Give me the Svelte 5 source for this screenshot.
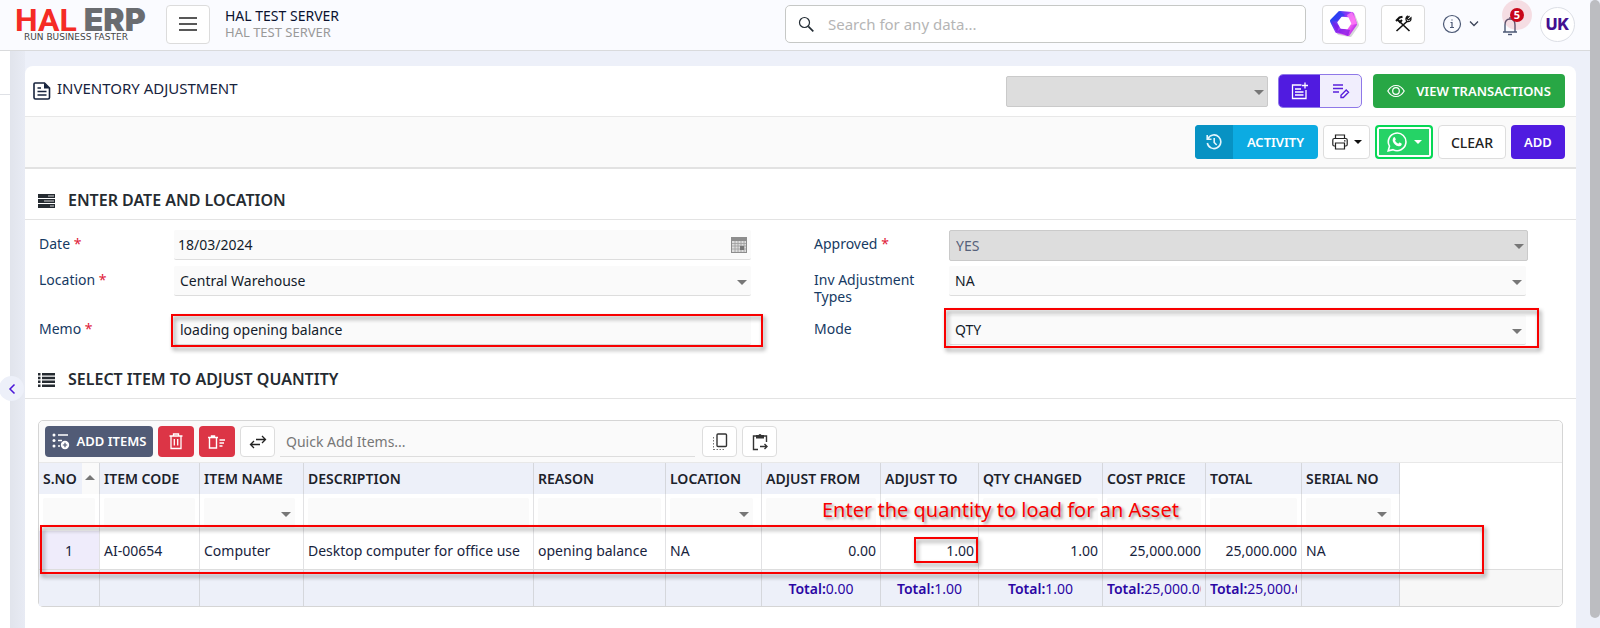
<script>
  let search = "";
  let date = "18/03/2024";
  let location = "Central Warehouse";
  let memo = "loading opening balance";
  let adjustmentType = "NA";
  let mode = "QTY";
  let quickAdd = "";

  let columns = [
    { title: "S.NO", width: 61, value: "1", sorted: true },
    { title: "ITEM CODE", width: 100, value: "AI-00654" },
    { title: "ITEM NAME", width: 104, value: "Computer", select: true },
    { title: "DESCRIPTION", width: 230, value: "Desktop computer for office use" },
    { title: "REASON", width: 132, value: "opening balance" },
    { title: "LOCATION", width: 96, value: "NA", select: true },
    { title: "ADJUST FROM", width: 119, value: "0.00", total: "0.00" },
    { title: "ADJUST TO", width: 98, value: "1.00", total: "1.00", marked: true },
    { title: "QTY CHANGED", width: 124, value: "1.00", total: "1.00" },
    { title: "COST PRICE", width: 103, value: "25,000.000", total: "25,000.000" },
    { title: "TOTAL", width: 96, value: "25,000.000", total: "25,000.000" },
    { title: "SERIAL NO", width: 98, value: "NA", select: true },
  ];
</script>

<div class="page">
  <header>
    <div class="logo">
      <div class="brand"><b class="hal">HAL</b><b class="erp">ERP</b></div>
      <div class="tagline">RUN BUSINESS FASTER</div>
    </div>
    <button class="square" aria-label="Menu">
      <svg width="20" height="16" viewBox="0 0 20 16" stroke="#222" stroke-width="1.5"><path d="M1 2h18M1 8h18M1 14h18" /></svg>
    </button>
    <div class="server">
      <strong>HAL TEST SERVER</strong>
      <span>HAL TEST SERVER</span>
    </div>
    <label class="search">
      <svg width="17" height="17" viewBox="0 0 17 17" fill="none" stroke="#222b33"><circle cx="6.5" cy="6.5" r="5" stroke-width="1.2" /><path d="M10.3 10.3l5 5" stroke-width="1.7" /></svg>
      <input bind:value={search} placeholder="Search for any data..." aria-label="Search" />
    </label>
    <button class="square ai" aria-label="Assistant">
      <svg width="32" height="32" viewBox="0 0 32 32" stroke-linejoin="round">
        <defs>
          <linearGradient id="gem" x1="0" y1="0.2" x2="1" y2="0.8">
            <stop offset="0" stop-color="#2547f4" />
            <stop offset="0.4" stop-color="#8a35f5" />
            <stop offset="0.75" stop-color="#f763f3" />
            <stop offset="1" stop-color="#b52bea" />
          </linearGradient>
        </defs>
        <path d="M14 6l11 1 4 10-7 10-11-2-6-10z" fill="#d6d6d9" stroke="#d6d6d9" stroke-width="4" />
        <path d="M12 5l12 1 3 10-7 10-11-3-5-10z" fill="url(#gem)" stroke="url(#gem)" stroke-width="4" />
        <path d="M4 13l7 5-2 7zM9 24l11 4 2-6-9-2z" fill="#7a18e6" opacity="0.7" />
        <path d="M11 3l-8 9 6 1 8-6z" fill="#1f3df2" opacity="0.6" />
        <path d="M19 7l5-3 5 12-6 1z" fill="#ff7cf6" opacity="0.8" />
        <path d="M14 9.500l6 .5 2.500 5.500-3.500 5-6-.5-3-5.500z" fill="#fff" stroke="#fff" stroke-width="1.500" />
      </svg>
    </button>
    <button class="square tools" aria-label="Tools">
      <svg width="18" height="18" viewBox="0 0 18 18" fill="none" stroke="#111" stroke-width="1.600"><path d="M5.500 6.500l10 9.500M2.500 16L13.500 6" /><path d="M2 6L5.500 2.500l3-.7M3.500 4.500l2.500 2.500 2-2" stroke-width="2" /><path d="M15.500 1L13 3.500l1.500 1.500L17 2.800q.5 4.200-4 3.800-2.500-3 .8-5.800" stroke-width="1.200" /></svg>
    </button>
    <button class="bare info" aria-label="Information">
      <svg width="20" height="20" viewBox="0 0 20 20" fill="none" stroke="#4b5875" stroke-width="1.200"><circle cx="10" cy="10" r="8.500" /><path d="M8.500 8.500H10v5M8 13.500h4M9.400 6h1.200" /></svg>
      <svg width="12" height="8" viewBox="0 0 12 8" fill="none" stroke="#3b4358" stroke-width="1.300"><path d="M2 1.500l4 4 4-4" /></svg>
    </button>
    <button class="bare bell" aria-label="Notifications">
      <svg width="16" height="20" viewBox="0 0 16 20" fill="none" stroke="#4b5875" stroke-width="1.400"><path d="M1 16h14M3 16V9q0-6 5-6t5 6v7M8 3V1" /><path d="M6 18.500h4" /></svg>
      <span class="halo"><span class="count">5</span></span>
    </button>
    <button class="avatar">UK</button>
  </header>

  <div class="body">
    <aside>
      <div class="side-top"></div>
      <button class="collapse" aria-label="Expand sidebar">
        <svg width="8" height="12" viewBox="0 0 8 12" fill="none" stroke="#4a16d8" stroke-width="1.500"><path d="M6.500 1.500L2 6l4.500 4.500" /></svg>
      </button>
    </aside>

    <main>
      <div class="title-bar">
        <svg width="18" height="18" viewBox="0 0 18 18" fill="none" stroke="#17233d" stroke-width="1.600"><path d="M2 1h9.500L16.500 6v9.500q0 1.500-1.500 1.500H2.500Q1 17 1 15.500V2q0-1 1-1z" /><path d="M4.500 6H8M4.500 9.500h9M4.500 13h9" stroke-width="1.300" /><path d="M11 1l5.500 5.500H11z" fill="#17233d" stroke="none" /></svg>
        <h1>INVENTORY ADJUSTMENT</h1>
        <div class="select off narrow"><select disabled aria-label="Template"><option></option></select></div>
        <div class="toggle">
          <button class="on" aria-label="New entry">
            <svg width="18" height="18" viewBox="0 0 18 18" fill="none" stroke="#fff" stroke-width="1.300"><path d="M10.500 3H1.500v13.500H15V8M4 7h6M4 10h8.500M4 13h8.500M14 .5v6M11 3.500h6" /></svg>
          </button>
          <button aria-label="Edit entry">
            <svg width="18" height="16" viewBox="0 0 18 16" fill="none" stroke="#5a20dc" stroke-width="1.400"><path d="M1 2h10M1 5.500h10M1 9h6" /><path d="M9 14.500v-2.300l5.200-5.200 2.300 2.300-5.200 5.200z" /></svg>
          </button>
        </div>
        <button class="btn green">
          <svg width="18" height="14" viewBox="0 0 18 14" fill="none" stroke="#fff" stroke-width="1.200"><path d="M.8 7Q4 1.500 9 1.500T17.200 7Q14 12.500 9 12.500T.8 7z" /><circle cx="9" cy="7" r="3.300" /></svg>
          VIEW TRANSACTIONS
        </button>
      </div>

      <div class="actions">
        <button class="activity">
          <span class="clock">
            <svg width="16" height="16" viewBox="0 0 16 16" fill="none" stroke="#e2f5fc" stroke-width="1.600"><path d="M2 4.500A6.800 6.800 0 1 1 1.300 9M1.200 1v4.200h4.300" /><path d="M8.200 4v4.500l2.500 2.500" /></svg>
          </span>
          <span class="word">ACTIVITY</span>
        </button>
        <button class="btn white print" aria-label="Print">
          <svg width="16" height="16" viewBox="0 0 16 16" fill="none" stroke="#222" stroke-width="1.200"><path d="M3.500 4V1h9v3M3.500 12H2.200Q.8 12 .8 10.500V6q0-1.500 1.500-1.500h11.400q1.500 0 1.500 1.500v4.500q0 1.500-1.400 1.500h-1.300M3.500 9h9v6h-9zM12 6.800h1.500" /></svg>
          <i class="caret"></i>
        </button>
        <button class="btn whatsapp" aria-label="WhatsApp">
          <svg width="20" height="20" viewBox="0 0 20 20" fill="none" stroke="#fff" stroke-width="1.600"><path d="M1.200 18.800l1.300-4.600A8.800 8.800 0 1 1 6 17.600z" /><path d="M6.500 5.500q1-.8 1.500 0l.8 1.800q0 .6-.8 1.400 1.200 2.200 3.300 3 1-1.300 1.500-1.100l1.700.9q.5.300 0 1.500-.8 1.500-2.800 1.300-4.500-.8-6-5.300-.2-2.300.8-3.500z" fill="#fff" stroke="none" /></svg>
          <i class="caret"></i>
        </button>
        <button class="btn white clear">CLEAR</button>
        <button class="btn violet">ADD</button>
      </div>

      <h2>
        <svg width="17" height="14" viewBox="0 0 17 14" fill="#252b31"><path d="M0 0h17v4H0zM0 5h17v4H0zM0 10h17v4H0z" /><path d="M10 1.500h6v1h-6zM6 6.500h10v1H6zM12 11.500h4v1h-4z" fill="#fff" opacity="0.8" /></svg>
        ENTER DATE AND LOCATION
      </h2>
      <div class="form">
        <div class="field">
          <label for="date">Date <em>*</em></label>
          <div class="control">
            <input id="date" class="date" bind:value={date} />
            <svg class="calendar" width="16" height="16" viewBox="0 0 16 16"><path d="M0 0h16v16H0z" fill="#8d8d8d" /><path d="M1 4h14v11H1z" fill="#ddd" /><path d="M4 4v11M7 4v11M10 4v11M13 4v11M1 6.500h14M1 9h14M1 12h14" stroke="#9d9d9d" stroke-width="0.800" /><path d="M9 9h4v4H9z" fill="#777" /></svg>
          </div>
        </div>
        <div class="field">
          <label for="approved">Approved <em>*</em></label>
          <div class="select off"><select id="approved" disabled><option>YES</option></select></div>
        </div>
        <div class="field">
          <label for="location">Location <em>*</em></label>
          <div class="select"><select id="location" bind:value={location}><option>Central Warehouse</option></select></div>
        </div>
        <div class="field">
          <label for="types">Inv Adjustment Types</label>
          <div class="select"><select id="types" bind:value={adjustmentType}><option>NA</option></select></div>
        </div>
        <div class="field">
          <label for="memo">Memo <em>*</em></label>
          <div class="control">
            <input id="memo" bind:value={memo} />
            <div class="mark memo-mark"></div>
          </div>
        </div>
        <div class="field">
          <label for="mode">Mode</label>
          <div class="select">
            <select id="mode" bind:value={mode}><option>QTY</option></select>
            <div class="mark mode-mark"></div>
          </div>
        </div>
      </div>

      <h2>
        <svg width="17" height="14" viewBox="0 0 17 14" fill="#252b31"><path d="M0 0h2.500v2.500H0zM0 3.800h2.500v2.500H0zM0 7.600h2.500v2.500H0zM0 11.400h2.500v2.500H0zM4 0h13v2.500H4zM4 3.800h13v2.500H4zM4 7.600h13v2.500H4zM4 11.400h13v2.500H4z" /></svg>
        SELECT ITEM TO ADJUST QUANTITY
      </h2>

      <div class="grid">
        <div class="grid-tools">
          <button class="btn slate">
            <svg width="18" height="17" viewBox="0 0 18 17" fill="none" stroke="#fff" stroke-width="1.500"><path d="M6 2h10M6 7.500h4" /><g fill="#fff" stroke="none"><circle cx="2" cy="2" r="1.500" /><circle cx="2" cy="7.500" r="1.500" /><circle cx="2" cy="13" r="1.500" /><circle cx="13" cy="12" r="4.200" /></g><path d="M6 13h2" /><path d="M13 9.800v4.400M10.800 12h4.400" stroke="#515b76" stroke-width="1.200" /></svg>
            ADD ITEMS
          </button>
          <button class="btn red" aria-label="Delete item">
            <svg width="14" height="17" viewBox="0 0 14 17" fill="none" stroke="#fff" stroke-width="1.300"><path d="M.5 3h13M4.500 3V1h5v2M2 3v12.500h10V3M5.300 6v6.500M8.700 6v6.500" /></svg>
          </button>
          <button class="btn red" aria-label="Clear all items">
            <svg width="18" height="14" viewBox="0 0 18 14" fill="none" stroke="#fff" stroke-width="1.400"><path d="M0 2.500h10M3.500 2.500V1h3v1.500M1.500 2.500V13h7V2.500M11.500 5H17M11.500 8H16M11.500 11H14.500" /></svg>
          </button>
          <button class="btn white tool" aria-label="Swap">
            <svg width="18" height="14" viewBox="0 0 18 14" fill="none" stroke="#222" stroke-width="1.300"><path d="M7 4.500h9.500M13 1l3.500 3.500L13 8M11 9.500H1.500M5 6L1.500 9.500 5 13" /></svg>
          </button>
          <input class="quick" bind:value={quickAdd} placeholder="Quick Add Items..." aria-label="Quick add items" />
          <button class="btn white tool" aria-label="Duplicate">
            <svg width="16" height="18" viewBox="0 0 16 18" fill="none" stroke="#333"><rect x="5" y="1" width="9.500" height="12.500" rx="1" stroke-width="1.400" /><path d="M1.500 4v13M1.500 16.500H13" stroke-dasharray="1.500 1.500" stroke="#777" /></svg>
          </button>
          <button class="btn white tool" aria-label="Paste">
            <svg width="16" height="18" viewBox="0 0 16 18" fill="none" stroke="#333" stroke-width="1.400"><path d="M6 16.500H1.500V3H4M12 3h2.500v6M8 13.500h7M12.500 11l2.500 2.500-2.500 2.500" /><path d="M4 2h2.500q1.500-2 3 0H12v3.500H4z" fill="#333" stroke="none" /></svg>
          </button>
        </div>

        <div class="table-area">
          <table>
            <colgroup>
              {#each columns as column}
                <col style="width: {column.width}px" />
              {/each}
              <col />
            </colgroup>
            <thead>
              <tr class="titles">
                {#each columns as column}
                  <th class:sorted={column.sorted}>{column.title}</th>
                {/each}
                <td></td>
              </tr>
              <tr class="filters">
                {#each columns as column}
                  <td>
                    {#if column.select}
                      <div class="select"><select aria-label="Filter {column.title}"><option></option></select></div>
                    {:else}
                      <input aria-label="Filter {column.title}" />
                    {/if}
                  </td>
                {/each}
                <td></td>
              </tr>
            </thead>
            <tbody>
              <tr>
                {#each columns as column}
                  <td class:number={column.total} class:index={column.sorted}>
                    {column.value}
                    {#if column.marked}<div class="mark cell-mark"></div>{/if}
                  </td>
                {/each}
                <td></td>
              </tr>
            </tbody>
            <tfoot>
              <tr>
                {#each columns as column}
                  <td>
                    {#if column.total}<div class="sum"><b>Total:</b>{column.total}</div>{/if}
                  </td>
                {/each}
                <td></td>
              </tr>
            </tfoot>
          </table>
          <div class="mark row-mark"></div>
          <p class="note">Enter the quantity to load for an Asset</p>
        </div>
      </div>
    </main>
  </div>
  <div class="scroll"></div>
</div>

<style>
  :global(body) {
    overflow: hidden;
    background: #edf0f9;
  }
  * {
    box-sizing: border-box;
  }
  .page {
    display: flex;
    flex-direction: column;
    min-height: 100vh;
    padding-right: 10px;
    font-family: "Noto Sans", sans-serif;
    font-size: 14px;
    line-height: 17px;
    color: #17233d;
  }
  button,
  input,
  select {
    font: inherit;
    color: inherit;
  }
  button {
    display: flex;
    align-items: center;
    justify-content: center;
    flex: none;
    padding: 0;
    border: 0;
    background: none;
    cursor: pointer;
  }
  svg {
    flex: none;
  }

  header {
    display: flex;
    align-items: center;
    height: 51px;
    padding: 0 15px 2px;
    background: #fafbff;
    border-bottom: 1px solid #d9dadc;
  }
  .logo {
    width: 151px;
  }
  .brand {
    display: flex;
    gap: 7px;
    height: 26px;
    line-height: 28px;
  }
  .hal {
    font-family: Roboto, sans-serif;
    font-size: 32px;
    color: #f52b25;
  }
  .erp {
    font-family: Inter, sans-serif;
    font-size: 32px;
    font-weight: 900;
    color: #6a6c70;
  }
  .tagline {
    padding-left: 9px;
    font-family: "DejaVu Sans", sans-serif;
    font-size: 9px;
    line-height: 10px;
    color: #444;
  }
  .square {
    width: 44px;
    height: 39px;
    background: #fff;
    border: 1px solid #dcdcdc;
    border-radius: 4px;
  }
  .server {
    display: flex;
    flex-direction: column;
    margin-left: 15px;
  }
  .server strong {
    font-weight: 400;
    color: #0b1230;
  }
  .server span {
    font-size: 13px;
    color: #999;
  }
  .search {
    display: flex;
    align-items: center;
    gap: 11px;
    width: 521px;
    height: 38px;
    margin-left: auto;
    padding: 0 12px;
    background: #fff;
    border: 1px solid #c6c8c6;
    border-radius: 5px;
  }
  .search input {
    flex: 1;
    border: 0;
    outline: 0;
    font-size: 15px;
  }
  .search input::placeholder {
    color: #b5b5b5;
  }
  .ai {
    margin-left: 16px;
  }
  .tools {
    margin: 0 17px 0 15px;
  }
  .info {
    gap: 6px;
  }
  .bell {
    position: relative;
    margin: 4px 22px 0;
  }
  .halo {
    position: absolute;
    left: 0;
    top: -16px;
    display: flex;
    align-items: center;
    justify-content: center;
    width: 30px;
    height: 30px;
    border-radius: 50%;
    background: rgba(220, 53, 69, 0.15);
  }
  .count {
    width: 14px;
    height: 14px;
    border-radius: 50%;
    background: #c8071a;
    color: #fff;
    font-size: 11px;
    font-weight: 700;
    line-height: 14px;
  }
  .avatar {
    width: 35px;
    height: 35px;
    border: 1px solid #dcdfe6;
    border-radius: 50%;
    background: #fff;
    color: #44108f;
    font-family: Inter, sans-serif;
    font-size: 16px;
    font-weight: 800;
  }

  .body {
    display: flex;
    flex: 1;
    padding-right: 14px;
  }
  aside {
    position: relative;
    width: 25px;
    flex: none;
    background: linear-gradient(to right, #fff 10px, #e1e4ec 10px, #e8ebf4);
  }
  .side-top {
    width: 10px;
    height: 44px;
    border-bottom: 1px solid #dfe1e6;
  }
  .collapse {
    position: absolute;
    top: 325px;
    left: -1px;
    width: 25px;
    height: 25px;
    border-radius: 50%;
    background: #edf0f9;
  }
  main {
    flex: 1;
    min-width: 0;
    margin-top: 15px;
    background: #fff;
    border-radius: 8px 8px 0 0;
  }
  .title-bar,
  .actions {
    display: flex;
    align-items: center;
    height: 50px;
    padding: 0 11px 0 8px;
  }
  h1 {
    flex: 1;
    margin: 0 0 6px 6px;
    font-size: 15px;
    font-weight: 400;
  }
  .actions {
    gap: 5px;
    height: 53px;
    justify-content: flex-end;
    background: #fafafa;
    border-top: 1px solid #e8e8e8;
    border-bottom: 2px solid #e2e2e2;
  }

  .select,
  .control {
    position: relative;
    flex: 1;
    height: 30px;
  }
  .select::after,
  .caret {
    content: "";
    border: 5px solid transparent;
    border-top-color: #777;
    border-bottom: 0;
  }
  .select::after {
    position: absolute;
    right: 4px;
    top: 14px;
    pointer-events: none;
  }
  select,
  .control input,
  .filters input {
    display: block;
    width: 100%;
    height: 30px;
    padding: 0 6px;
    appearance: none;
    background: #fafafa;
    border: 0;
    border-bottom: 1px solid #ddd;
    border-radius: 2px;
    outline: 0;
    color: #141c2b;
    font-size: 14px;
  }
  .off {
    margin-right: -2px;
  }
  .off select {
    height: 31px;
    background: #ddd;
    border: 1px solid #cacaca;
    color: #56617a;
    opacity: 1;
  }
  .narrow {
    flex: none;
    width: 262px;
    margin-right: 10px;
  }
  .control .date {
    padding: 0 4px;
  }
  .calendar {
    position: absolute;
    right: 4px;
    top: 7px;
  }
  .toggle {
    display: flex;
    height: 34px;
    margin-right: 11px;
    background: #f1eefd;
    border: 1px solid #8f78e8;
    border-radius: 5px;
    overflow: hidden;
  }
  .toggle button {
    width: 41px;
  }
  .toggle .on {
    background: #501be0;
  }
  .btn {
    gap: 11px;
    height: 34px;
    border-radius: 4px;
    color: #fff;
    font-weight: 600;
  }
  .green {
    width: 192px;
    gap: 11px;
    background: #28a745;
    font-size: 13px;
  }
  .activity {
    width: 123px;
    height: 34px;
    border-radius: 4px;
    overflow: hidden;
    background: #0cabe2;
    color: #fff;
    font-size: 13px;
    font-weight: 600;
  }
  .clock {
    display: flex;
    align-items: center;
    justify-content: center;
    width: 38px;
    height: 34px;
    background: #0792c3;
  }
  .word {
    flex: 1;
  }
  .white {
    background: #fff;
    border: 1px solid #ddd;
    color: #222;
    font-weight: 500;
  }
  .print {
    width: 47px;
    gap: 6px;
  }
  .caret {
    border-width: 4px;
    border-bottom: 0;
    border-top-color: #111;
  }
  .whatsapp {
    width: 58px;
    gap: 7px;
    background: #25d366;
    border: 2px solid #06d755;
    box-shadow: inset 0 0 0 2px #fff;
  }
  .whatsapp .caret {
    border-top-color: #fff;
  }
  .clear {
    width: 68px;
  }
  .violet {
    width: 54px;
    background: #501be0;
    font-size: 13px;
  }

  h2 {
    display: flex;
    align-items: center;
    gap: 13px;
    height: 51px;
    margin: 0;
    padding: 13px 13px 0;
    border-bottom: 1px solid #e3e3e3;
    color: #252b31;
    font-size: 16px;
    font-weight: 600;
  }
  .form {
    display: grid;
    grid-template-columns: 1fr 1fr;
    column-gap: 63px;
    row-gap: 6px;
    padding: 10px 50px 3px 14px;
  }
  .field {
    display: flex;
    align-items: flex-start;
  }
  .field:nth-child(n + 3):nth-child(-n + 4) {
    min-height: 43px;
  }
  label[for] {
    width: 135px;
    padding: 5px 12px 0 0;
    color: #163a63;
  }
  em {
    color: #e0213a;
    font-style: normal;
  }
  .mark {
    position: absolute;
    border: 2px solid #f80000;
    filter: drop-shadow(2px 3px 2px rgba(0, 0, 0, 0.45));
    pointer-events: none;
  }
  .memo-mark {
    inset: -1px -12px -2px -3px;
  }
  .mode-mark {
    inset: -7px -13px -3px -5px;
  }

  .grid {
    margin: 21px 13px 0;
    border: 1px solid #d5d5d5;
    border-radius: 5px;
  }
  .grid-tools {
    display: flex;
    align-items: center;
    gap: 5px;
    height: 42px;
    padding: 0 6px;
    background: #fafafa;
    border-bottom: 1px solid #e8e8e8;
    border-radius: 5px 5px 0 0;
  }
  .grid-tools .btn {
    height: 31px;
  }
  .slate {
    width: 108px;
    gap: 7px;
    background: #515b76;
    font-size: 13px;
  }
  .red {
    width: 36px;
    background: #dc3546;
  }
  .tool {
    width: 35px;
  }
  .quick {
    width: 415px;
    height: 31px;
    margin-right: 2px;
    padding: 0 6px;
    border: 0;
    border-bottom: 1px solid #ddd;
    background: none;
    outline: 0;
  }
  .quick::placeholder {
    color: #777;
  }
  .table-area {
    position: relative;
  }
  table {
    width: 100%;
    table-layout: fixed;
    border-collapse: separate;
    border-spacing: 0;
  }
  th,
  td {
    padding: 0 4px;
    border-right: 1px solid #e2e2e4;
    text-align: left;
    white-space: nowrap;
  }
  td:last-child {
    border-right: 0;
  }
  .titles {
    height: 31px;
  }
  th {
    background: #edf0f9;
    border-right-color: #d5d7dc;
    color: #1c222b;
    font-weight: 600;
  }
  .sorted {
    position: relative;
  }
  .sorted::before {
    content: "";
    position: absolute;
    right: 0;
    top: 0;
    width: 17px;
    height: 31px;
    background: #fafafa;
  }
  .sorted::after {
    content: "";
    position: absolute;
    right: 4px;
    top: 12px;
    border: 5px solid transparent;
    border-bottom-color: #777;
    border-top: 0;
  }
  .filters {
    height: 37px;
  }
  .filters .select {
    margin-right: 4px;
  }
  .filters input,
  .filters select {
    border-bottom: 0;
  }
  tbody tr {
    height: 39px;
  }
  tbody td {
    position: relative;
    border-bottom: 1px solid #ddd;
  }
  .number {
    text-align: right;
  }
  .index {
    background: #efecfb;
    text-align: center;
  }
  .cell-mark {
    inset: 6px 0 6px 33px;
  }
  tfoot tr {
    height: 36px;
  }
  tfoot td {
    background: #edf0f9;
    border-right-color: #d5d7dc;
  }
  tfoot td:last-child {
    background: #f7f7f7;
    border-radius: 0 0 5px 0;
  }
  .sum {
    overflow: hidden;
    color: #2a06a4;
    text-align: center;
  }
  .sum b {
    font-weight: 600;
  }
  .row-mark {
    top: 62px;
    left: 1px;
    right: 78px;
    height: 49px;
  }
  .note {
    position: absolute;
    top: 34px;
    left: 783px;
    margin: 0;
    color: #f80000;
    font-size: 20px;
    line-height: 26px;
    white-space: nowrap;
    text-shadow: 2px 2px 3px rgba(0, 0, 0, 0.4);
  }
  .scroll {
    position: fixed;
    top: 0;
    right: 0;
    bottom: 10px;
    width: 10px;
    border-radius: 5px;
    background: #bcbdc1;
  }
</style>
